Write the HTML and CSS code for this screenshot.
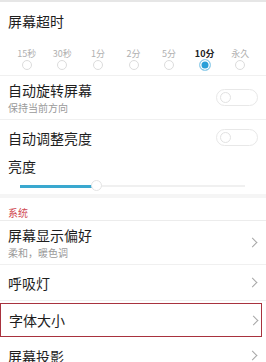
FILE: index.html
```html
<!doctype html>
<html>

<head>
  <meta charset="utf-8">
  <title>显示</title>
  <link rel="stylesheet" href="styles.css">
</head>

<body>
  <div class="page">
    <div class="timeout">
      <div class="title">屏幕超时</div>
      <div class="choices">
        <div class="choice"><span>15秒</span><i class="radio"></i></div>
        <div class="choice"><span>30秒</span><i class="radio"></i></div>
        <div class="choice"><span>1分</span><i class="radio"></i></div>
        <div class="choice"><span>2分</span><i class="radio"></i></div>
        <div class="choice"><span>5分</span><i class="radio"></i></div>
        <div class="choice on"><span>10分</span><i class="radio"></i></div>
        <div class="choice"><span>永久</span><i class="radio"></i></div>
      </div>
    </div>

    <div class="row two">
      <div class="text">
        <div class="title">自动旋转屏幕</div>
        <div class="sub">保持当前方向</div>
      </div>
      <i class="switch"></i>
    </div>

    <div class="row bright-auto">
      <div class="title">自动调整亮度</div>
      <i class="switch"></i>
    </div>

    <div class="brightness">
      <div class="title">亮度</div>
      <div class="slider">
        <div class="fill"></div>
        <i class="knob"></i>
      </div>
    </div>

    <div class="section">系统</div>

    <div class="row two">
      <div class="text">
        <div class="title">屏幕显示偏好</div>
        <div class="sub">柔和，暖色调</div>
      </div>
      <span class="arrow"></span>
    </div>

    <div class="row">
      <div class="title">呼吸灯</div>
      <span class="arrow"></span>
    </div>

    <div class="row marked">
      <div class="title">字体大小</div>
      <span class="arrow"></span>
    </div>

    <div class="row">
      <div class="title">屏幕投影</div>
      <span class="arrow"></span>
    </div>
  </div>
</body>

</html>
```

FILE: styles.css
```css
body {
  margin: 0;
  background-color: #fff;
  font-family: "Noto Sans CJK SC", "Noto Sans", sans-serif;
  color: #1e1e1e;
}

.page {
  border-top: 2px solid #e6e6e6;
  overflow: hidden;
  height: 360px;
}

.title {
  font-size: 14px;
  line-height: 18px;
}

.sub {
  font-size: 10px;
  line-height: 12px;
  color: #9a9a9a;
  margin-top: 3px;
}

/* 屏幕超时 */
.timeout {
  padding: 10px 0 0 0;
  height: 63px;
  border-bottom: 1px solid #f0f0f0;
}

.timeout .title {
  padding-left: 8px;
}

.choices {
  display: flex;
  padding: 0 8px 0 9px;
  margin-top: 18px;
}

.choice {
  flex: 1;
  display: flex;
  flex-direction: column;
  align-items: center;
}

.choice span {
  font-size: 9px;
  line-height: 11px;
  color: #b0b0b0;
}

.choice.on span {
  color: #222;
  font-weight: bold;
}

.radio {
  width: 10px;
  height: 10px;
  border: 1px solid #dcdcdc;
  border-radius: 50%;
  margin-top: 1px;
  box-sizing: border-box;
}

.choice.on .radio {
  width: 12px;
  height: 12px;
  margin-top: 0;
  border: 1.5px solid #9fd3ec;
  background: #2a9fd8;
  box-shadow: inset 0 0 0 1.5px #fff;
}

/* 行 */
.row {
  display: flex;
  align-items: center;
  justify-content: space-between;
  padding: 0 8px;
  height: 35px;
  border-bottom: 1px solid #f0f0f0;
}

.row.two {
  height: 43px;
}

.row.bright-auto {
  height: 31px;
  border-bottom: none;
  padding-top: 2px;
}

.switch {
  width: 42px;
  height: 17px;
  border: 1px solid #e8e8e8;
  border-radius: 10px;
  position: relative;
  box-sizing: border-box;
}

.switch::before {
  content: "";
  position: absolute;
  left: 3px;
  top: 2px;
  width: 11px;
  height: 11px;
  border: 1px solid #e2e2e2;
  border-radius: 50%;
  box-sizing: border-box;
}

.brightness {
  padding: 4px 8px 0 8px;
  height: 37px;
  border-bottom: 4px solid #f5f5f5;
}

.slider {
  position: relative;
  margin: 10px 13px 0 12px;
  height: 2px;
  background: #f0f0f0;
}

.slider .fill {
  width: 33%;
  height: 3px;
  margin-top: -0.5px;
  background: #3aa8cf;
}

.slider .knob {
  position: absolute;
  left: 33%;
  top: -5px;
  width: 11px;
  height: 11px;
  margin-left: -3px;
  border: 1px solid #e4e4e4;
  border-radius: 50%;
  background: #fff;
  box-sizing: border-box;
}

.section {
  font-size: 10px;
  line-height: 12px;
  color: #d0474f;
  padding: 9px 8px 1px 8px;
  border-bottom: 1px solid #ececec;
}

.arrow {
  width: 6px;
  height: 6px;
  border-right: 1.2px solid #a6a6a6;
  border-top: 1.2px solid #a6a6a6;
  transform: rotate(45deg);
  margin-right: 2px;
}

.row.marked {
  height: 32px;
  margin: 2px 4px 1px 0;
  border: 1.5px solid #a8323e;
  padding-right: 2px;
}
```
